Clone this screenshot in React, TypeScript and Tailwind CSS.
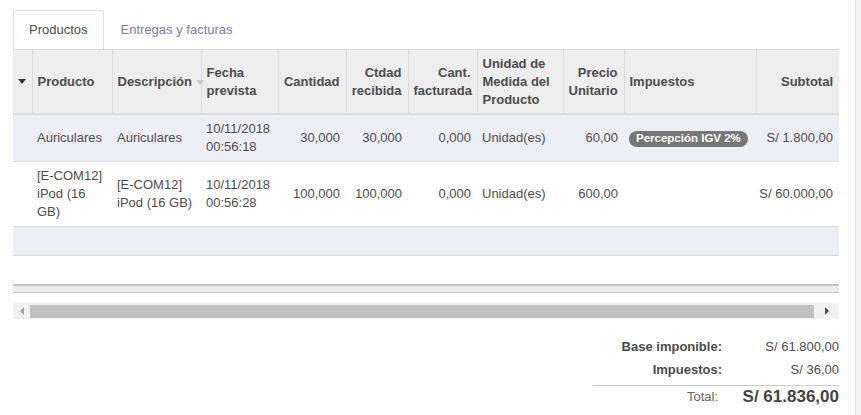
import React from "react";

const cols = [19, 80, 89, 77, 68, 62, 69, 86, 61, 132, 83];

type Row = {
  producto: string[];
  descripcion: string[];
  fecha: string[];
  cantidad: string;
  recibida: string;
  facturada: string;
  unidad: string;
  precio: string;
  impuesto?: string;
  subtotal: string;
};

const rows: Row[] = [
  {
    producto: ["Auriculares"],
    descripcion: ["Auriculares"],
    fecha: ["10/11/2018", "00:56:18"],
    cantidad: "30,000",
    recibida: "30,000",
    facturada: "0,000",
    unidad: "Unidad(es)",
    precio: "60,00",
    impuesto: "Percepción IGV 2%",
    subtotal: "S/ 1.800,00",
  },
  {
    producto: ["[E-COM12]", "iPod (16", "GB)"],
    descripcion: ["[E-COM12]", "iPod (16 GB)"],
    fecha: ["10/11/2018", "00:56:28"],
    cantidad: "100,000",
    recibida: "100,000",
    facturada: "0,000",
    unidad: "Unidad(es)",
    precio: "600,00",
    subtotal: "S/ 60.000,00",
  },
];

function Lines({ items }: { items: string[] }) {
  return (
    <>
      {items.map((t, i) => (
        <div key={i}>{t}</div>
      ))}
    </>
  );
}

export default function App() {
  const th = "border-r border-b-2 border-[#dcdcdc] py-[4px] pl-[5px] pr-[6px] align-middle font-bold";
  const td = "py-[5px] pl-[5px] pr-[6px] align-middle";

  return (
    <div className="flex w-[861px] h-[415px] bg-white text-[13px] leading-[18px] text-[#4c4c4c] font-['Liberation_Sans',Arial,sans-serif] overflow-hidden">
      <div className="w-[855px] pl-[13px] pr-[16px]">
        {/* Tabs */}
        <div className="flex pt-[10px] border-b border-[#dddddd]">
          <div className="h-[39px] -mb-px px-[15px] flex items-center bg-white border border-b-0 border-[#dddddd] rounded-t-[3px]">
            Productos
          </div>
          <div className="h-[39px] ml-[2px] px-[15px] flex items-center text-[#7c7bad]">
            Entregas y facturas
          </div>
        </div>

        {/* Lines table */}
        <table className="table-fixed w-[826px] border-collapse">
          <colgroup>
            {cols.map((w, i) => (
              <col key={i} style={{ width: w }} />
            ))}
          </colgroup>
          <thead className="bg-[#eeeeee]">
            <tr className="h-[64px]">
              <th className={th + " !p-0"}>
                <div className="flex justify-center">
                  <span className="w-0 h-0 border-l-[4px] border-r-[4px] border-t-[5px] border-l-transparent border-r-transparent border-t-[#333333]" />
                </div>
              </th>
              <th className={th + " text-left"}>Producto</th>
              <th className={th + " text-left relative"}>
                Descripción
                <span className="absolute right-[-3px] top-[30px] w-0 h-0 border-l-[4px] border-r-[4px] border-t-[5px] border-l-transparent border-r-transparent border-t-[#c8c8c8]" />
              </th>
              <th className={th + " text-left"}>
                <Lines items={["Fecha", "prevista"]} />
              </th>
              <th className={th + " text-right"}>Cantidad</th>
              <th className={th + " text-right"}>
                <Lines items={["Ctdad", "recibida"]} />
              </th>
              <th className={th + " text-right"}>
                <Lines items={["Cant.", "facturada"]} />
              </th>
              <th className={th + " text-left"}>
                <Lines items={["Unidad de", "Medida del", "Producto"]} />
              </th>
              <th className={th + " text-right"}>
                <Lines items={["Precio", "Unitario"]} />
              </th>
              <th className={th + " text-left"}>Impuestos</th>
              <th className={th + " text-right border-r-0"}>Subtotal</th>
            </tr>
          </thead>
          <tbody>
            {rows.map((r, i) => (
              <tr key={i} className={(i % 2 === 0 ? "bg-[#eeeef6]" : "bg-white") + " border-b border-[#dddddd]"}>
                <td className={td} />
                <td className={td}>
                  <Lines items={r.producto} />
                </td>
                <td className={td}>
                  <Lines items={r.descripcion} />
                </td>
                <td className={td}>
                  <Lines items={r.fecha} />
                </td>
                <td className={td + " text-right"}>{r.cantidad}</td>
                <td className={td + " text-right"}>{r.recibida}</td>
                <td className={td + " text-right"}>{r.facturada}</td>
                <td className={td}>{r.unidad}</td>
                <td className={td + " text-right"}>{r.precio}</td>
                <td className={td}>
                  {r.impuesto && (
                    <span className="inline-flex items-center h-[16px] px-[7px] rounded-full bg-[#777777] text-white text-[11.5px] font-bold leading-none whitespace-nowrap">
                      {r.impuesto}
                    </span>
                  )}
                </td>
                <td className={td + " text-right whitespace-nowrap !pl-0"}>{r.subtotal}</td>
              </tr>
            ))}
            <tr className="h-[29px] bg-[#eeeef6] border-b border-[#dddddd]">
              <td colSpan={11} />
            </tr>
          </tbody>
        </table>

        {/* table footer */}
        <div className="mt-[28px] h-[9px] bg-[#ececec] border-t-2 border-b border-[#c4c4c4]" />

        {/* horizontal scrollbar */}
        <div className="mt-[10px] h-[16px] bg-[#f1f1f1] flex items-center">
          <div className="w-[17px] flex justify-center">
            <span className="w-0 h-0 border-t-[4px] border-b-[4px] border-r-[4px] border-t-transparent border-b-transparent border-r-[#a3a3a3]" />
          </div>
          <div className="flex-1 h-[13px] bg-[#c1c1c1]" />
          <div className="w-[25px] flex justify-center">
            <span className="w-0 h-0 border-t-[4px] border-b-[4px] border-l-[4px] border-t-transparent border-b-transparent border-l-[#505050]" />
          </div>
        </div>

        {/* totals */}
        <div className="mt-[16px] ml-auto w-[246px]">
          <div className="flex h-[23px] items-center">
            <div className="w-[129px] text-right font-bold">Base imponible:</div>
            <div className="flex-1 text-right">S/ 61.800,00</div>
          </div>
          <div className="flex h-[23px] items-center">
            <div className="w-[129px] text-right font-bold">Impuestos:</div>
            <div className="flex-1 text-right">S/ 36,00</div>
          </div>
          <div className="mt-[4px] flex h-[23px] items-center border-t border-[#cccccc]">
            <div className="w-[125px] text-right text-[#666666]">Total:</div>
            <div className="flex-1 text-right text-[17px] font-bold text-[#444444]">S/ 61.836,00</div>
          </div>
        </div>
      </div>

      {/* right edge strip */}
      <div className="w-[6px] h-full bg-[#f3f3f3] border-l border-[#dedede]" />
    </div>
  );
}
